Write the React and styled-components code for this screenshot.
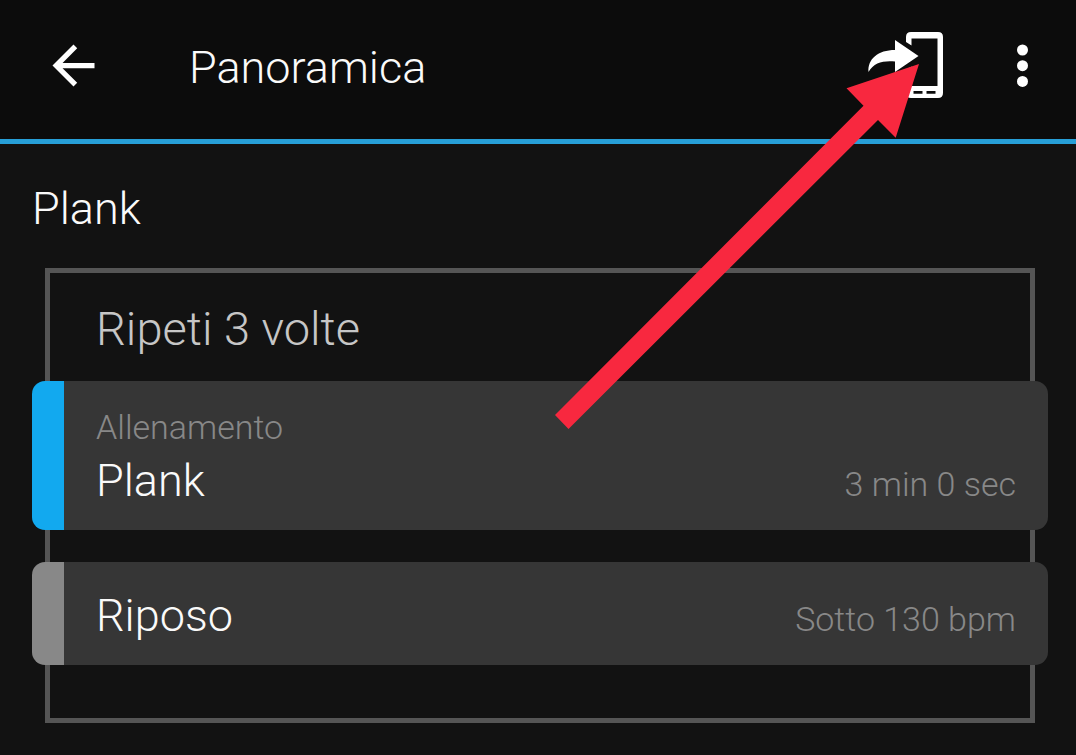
import React from 'react';
import styled, { createGlobalStyle } from 'styled-components';

const GlobalStyle = createGlobalStyle`
  * {
    box-sizing: border-box;
  }

  body {
    margin: 0;
    background: #121212;
    color: #fafafa;
    font-family: Roboto, 'Liberation Sans', sans-serif;
    font-weight: 300;
  }
`;

const Page = styled.div`
  position: relative;
  overflow-x: hidden;
`;

const Header = styled.header`
  display: flex;
  align-items: center;
  height: 144px;
  padding: 0 34px 8px 42px;
  background: #0c0c0c;
  border-bottom: 5px solid #279fd7;
`;

const IconButton = styled.button`
  display: flex;
  align-items: center;
  justify-content: center;
  flex-shrink: 0;
  padding: 0;
  border: 0;
  background: none;
  color: #ffffff;
  cursor: pointer;

  svg {
    display: block;
    fill: currentColor;
  }
`;

const Title = styled.h1`
  flex: 1;
  margin: 0 0 0 84px;
  padding-top: 4px;
  font-size: 45px;
  line-height: 60px;
  font-weight: 300;
`;

const Actions = styled.div`
  display: flex;
  align-items: center;
  gap: 56px;
`;

const Content = styled.main`
  padding: 35px 28px 32px 32px;
`;

const WorkoutName = styled.h2`
  margin: 0 0 29px;
  font-size: 45px;
  line-height: 60px;
  font-weight: 300;
`;

const RepeatGroup = styled.section`
  margin: 0 13px;
  padding: 26px 0 53px;
  border: 5px solid #555555;
`;

const RepeatLabel = styled.h3`
  margin: 0 46px 22px;
  color: #c6c6c6;
  font-size: 47px;
  line-height: 60px;
  font-weight: 300;
`;

const StepList = styled.ul`
  display: flex;
  flex-direction: column;
  gap: 32px;
  /* the cards hang over both sides of the frame */
  margin: 0 -18px;
  padding: 0;
  list-style: none;
`;

const Step = styled.li`
  padding: 24px 32px 19px;
  border-left: 32px solid ${(props) => props.$accent};
  border-radius: 13px;
  background: #363636;
`;

const StepType = styled.div`
  margin-bottom: 2px;
  color: #888888;
  font-size: 34px;
  line-height: 44px;
`;

const StepRow = styled.div`
  display: flex;
  align-items: baseline;
  justify-content: space-between;
  gap: 24px;
`;

const StepName = styled.span`
  font-size: 45px;
  line-height: 60px;
`;

const StepTarget = styled.span`
  color: #888888;
  font-size: 34px;
  line-height: 44px;
`;

const Pointer = styled.svg`
  position: absolute;
  top: 64px;
  right: 157px;
  pointer-events: none;
`;

const steps = [
  {
    type: 'Allenamento',
    name: 'Plank',
    target: '3 min 0 sec',
    accent: '#12a9ef',
  },
  { name: 'Riposo', target: 'Sotto 130 bpm', accent: '#888888' },
];

function BackIcon() {
  return (
    <svg width="63" height="63" viewBox="0 0 24 24">
      <path d="M20 11H7.83l5.59-5.59L12 4l-8 8 8 8 1.41-1.41L7.83 13H20z" />
    </svg>
  );
}

function SendToDeviceIcon() {
  return (
    <svg width="80" height="70" viewBox="0 0 80 70">
      <path
        fillRule="evenodd"
        d="M45 1H72Q77 1 77 6V62Q77 67 72 67H45Q40 67 40 62V39L45.500 35.500V55H71.500V7.500H45.500V14.500L40 11V6Q40 1 45 1ZM47.500 60V62.700H56.500V60ZM60.500 60V62.700H69.500V60Z"
      />
      <path d="M29 9L52.500 25L29 41V30.500C17 29.500 8 31.500 2.500 41C1.500 28 12 19 29 19Z" />
    </svg>
  );
}

function MoreIcon() {
  return (
    <svg width="40" height="48" viewBox="0 0 40 48">
      <circle cx="20.500" cy="8" r="5.500" />
      <circle cx="20.500" cy="23.700" r="5.500" />
      <circle cx="20.500" cy="39.400" r="5.500" />
    </svg>
  );
}

function App() {
  return (
    <Page>
      <GlobalStyle />
      <Header>
        <IconButton type="button" aria-label="Indietro">
          <BackIcon />
        </IconButton>
        <Title>Panoramica</Title>
        <Actions>
          <IconButton type="button" aria-label="Invia al dispositivo">
            <SendToDeviceIcon />
          </IconButton>
          <IconButton type="button" aria-label="Altre opzioni">
            <MoreIcon />
          </IconButton>
        </Actions>
      </Header>

      <Content>
        <WorkoutName>Plank</WorkoutName>
        <RepeatGroup>
          <RepeatLabel>Ripeti 3 volte</RepeatLabel>
          <StepList>
            {steps.map((step) => (
              <Step key={step.name} $accent={step.accent}>
                {step.type && <StepType>{step.type}</StepType>}
                <StepRow>
                  <StepName>{step.name}</StepName>
                  <StepTarget>{step.target}</StepTarget>
                </StepRow>
              </Step>
            ))}
          </StepList>
        </RepeatGroup>
      </Content>

      <Pointer width="364" height="365" viewBox="0 0 364 365" aria-hidden="true">
        <polygon
          fill="#f8283f"
          points="364,0 291.500,24.300 308.500,41.700 0,351 13.500,365 323,56 340.700,73.700"
        />
      </Pointer>
    </Page>
  );
}

export default App;
